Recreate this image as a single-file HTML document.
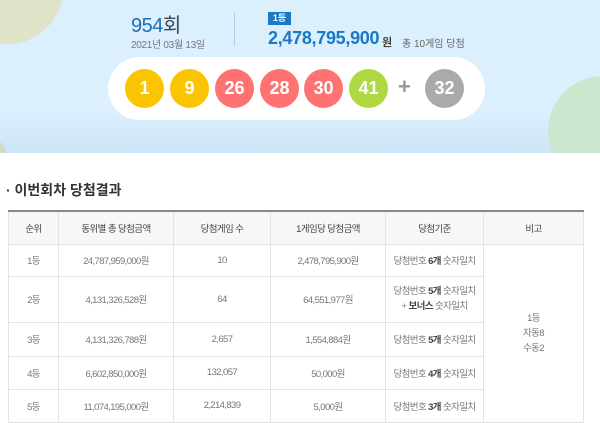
<!DOCTYPE html>
<html><head><meta charset="utf-8"><style>
*{margin:0;padding:0;box-sizing:border-box}
body{width:600px;height:422px;overflow:hidden;background:#fff;font-family:"Liberation Sans","Noto Sans CJK KR",sans-serif;position:relative}
.band{position:absolute;left:0;top:0;width:600px;height:153px;background:linear-gradient(#dbeffd 0,#dbeffd 115px,#cbe5f8 153px);overflow:hidden}
.c1{position:absolute;left:-48px;top:-72px;width:112px;height:116px;border-radius:50%;background:#dfe3c8}
.c2{position:absolute;left:-20px;top:140px;width:26px;height:26px;border-radius:50%;background:#d6d8c6}
.c3{position:absolute;left:548px;top:76px;width:110px;height:110px;border-radius:50%;background:#cde6d0}
.t{position:absolute;white-space:nowrap}
.pill{position:absolute;left:108px;top:57px;width:377px;height:63px;border-radius:32px;background:#fff}
.b{position:absolute;top:69px;width:39px;height:39px;border-radius:50%;color:#fff;font-weight:bold;font-size:18px;text-align:center;line-height:39px}
.y{background:#fbc400}.r{background:#ff7272}.g{background:#b0d840}.k{background:#aaa}
table{position:absolute;left:8px;top:210px;width:575px;table-layout:fixed;border-collapse:collapse;border-top:2px solid #8a8a8a;font-size:9.5px;color:#777;text-align:center;letter-spacing:-0.6px}
td,th{border:1px solid #e3e3e3;font-weight:normal}
th{background:#f7f7f7;height:33px;color:#444}
b{color:#444}
</style></head><body>
<div class="band"><div class="c1"></div><div class="c2"></div><div class="c3"></div>
<div class="t" style="left:131px;top:9px;font-size:20px;color:#1a6fb8;letter-spacing:-0.5px">954<span style="color:#3a4a5a">회</span></div>
<div class="t" style="left:131px;top:36px;font-size:10px;color:#777;letter-spacing:-0.3px">2021년 03월 13일</div>
<div style="position:absolute;left:234px;top:12px;width:1px;height:34px;background:#a9d0ec"></div>
<div class="t" style="left:268px;top:12px;width:23px;height:13px;background:#1a79c6;color:#fff;font-size:9px;font-weight:bold;text-align:center;line-height:13px">1등</div>
<div class="t" style="left:268px;top:28px;font-size:18px;color:#1a79c6;font-weight:bold;letter-spacing:-0.3px">2,478,795,900</div>
<div class="t" style="left:382px;top:34px;font-size:11px;color:#444;font-weight:bold">원</div>
<div class="t" style="left:402px;top:35px;font-size:10px;color:#666">총 10게임 당첨</div>
<div class="pill"></div>
<div class="b y" style="left:125px">1</div>
<div class="b y" style="left:170px">9</div>
<div class="b r" style="left:215px">26</div>
<div class="b r" style="left:260px">28</div>
<div class="b r" style="left:304px">30</div>
<div class="b g" style="left:349px">41</div>
<div class="t" style="left:398px;top:74px;font-size:22px;color:#999;font-weight:bold">+</div>
<div class="b k" style="left:425px">32</div>
</div>
<div class="t" style="left:6px;top:180px;font-size:14px;color:#333;font-weight:bold">· 이번회차 당첨결과</div>
<table>
<colgroup><col style="width:50px"><col style="width:115px"><col style="width:97px"><col style="width:115px"><col style="width:98px"><col style="width:100px"></colgroup>
<tr><th>순위</th><th>동위별 총 당첨금액</th><th>당첨게임 수</th><th>1게임당 당첨금액</th><th>당첨기준</th><th>비고</th></tr>
<tr style="height:32px"><td>1등</td><td>24,787,959,000원</td><td>10</td><td>2,478,795,900원</td><td>당첨번호 <b>6개</b> 숫자일치</td><td rowspan="5" style="line-height:15px">1등<br>자동8<br>수동2</td></tr>
<tr style="height:46px"><td>2등</td><td>4,131,326,528원</td><td>64</td><td>64,551,977원</td><td style="line-height:15px">당첨번호 <b>5개</b> 숫자일치<br>+ <b>보너스</b> 숫자일치</td></tr>
<tr style="height:34px"><td>3등</td><td>4,131,326,788원</td><td>2,657</td><td>1,554,884원</td><td>당첨번호 <b>5개</b> 숫자일치</td></tr>
<tr style="height:33px"><td>4등</td><td>6,602,850,000원</td><td>132,057</td><td>50,000원</td><td>당첨번호 <b>4개</b> 숫자일치</td></tr>
<tr style="height:33px"><td>5등</td><td>11,074,195,000원</td><td>2,214,839</td><td>5,000원</td><td>당첨번호 <b>3개</b> 숫자일치</td></tr>
</table>
</body></html>
